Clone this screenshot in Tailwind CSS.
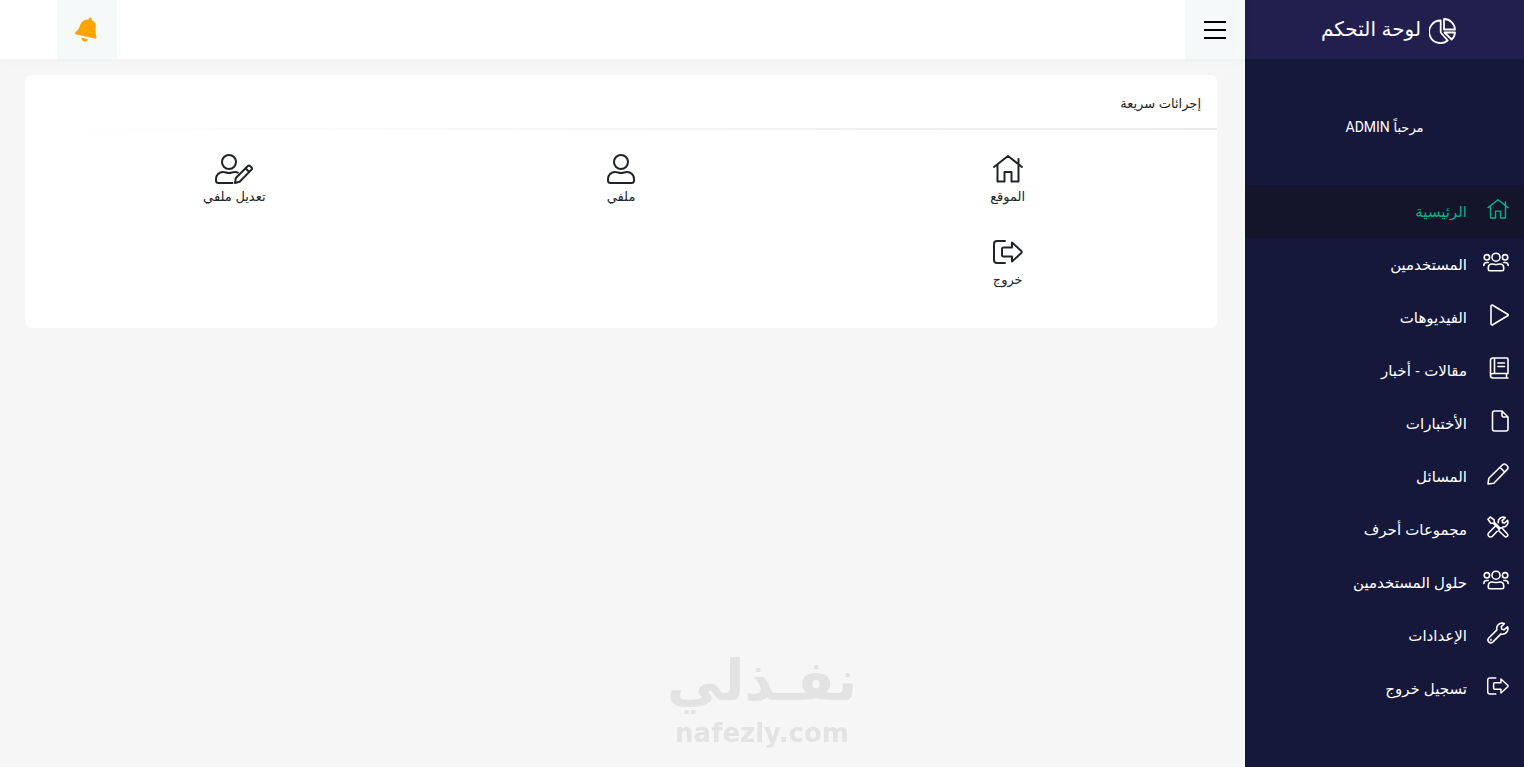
<!DOCTYPE html>
<html lang="ar" dir="rtl">
<head>
    <meta charset="UTF-8">
    <meta name="viewport" content="width=device-width, initial-scale=1.0">
    <title>لوحة التحكم</title>
    <script src="https://cdn.jsdelivr.net/npm/@tailwindcss/browser@4"></script>
</head>
<body class="bg-[#f6f6f6] text-[#212529] font-['Liberation_Sans','DejaVu_Sans',sans-serif]">
    <!-- Icon sprite -->
    <svg class="hidden">
        <symbol id="home" viewBox="0 0 30 28">
            <path d="M1 12 15 1l14 11M4.500 9.500v17h7v-9.500h7v9.500h7V9.500M25.500 4v5"/>
        </symbol>
        <symbol id="users" viewBox="0 0 26 20">
            <circle cx="13" cy="5.200" r="4"/><circle cx="3.900" cy="5.300" r="2.700"/><circle cx="22.100" cy="5.300" r="2.700"/>
            <path d="M9 12c1.500 0 2.400.5 4 .5s2.500-.5 4-.5c2.400 0 3.700 1.600 3.700 4v1.200c0 1-.6 1.600-1.500 1.600H6.800c-.9 0-1.500-.6-1.500-1.600V16c0-2.400 1.300-4 3.700-4zM.8 13.500c0-2 1.200-3 3-3h1.400M25.200 13.500c0-2-1.200-3-3-3h-1.400"/>
        </symbol>
        <symbol id="play" viewBox="0 0 20 22">
            <path d="M2 2.200v17.600c0 1 .9 1.500 1.700 1l15-9c.8-.5.8-1.100 0-1.600l-15-9c-.8-.5-1.700 0-1.700 1z"/>
        </symbol>
        <symbol id="book" viewBox="0 0 20 22">
            <path d="M19 16.500V2c0-.6-.4-1-1-1H4C2.500 1 1.500 2 1.500 3.500v15c0 1.500 1 2.500 2.500 2.500h15M17.500 16.500V21M19 16.500H4c-1.500 0-2.500.9-2.500 2.200M5.500 1v15.500M9 6h6.500M9 9.500h6.500"/>
        </symbol>
        <symbol id="file" viewBox="0 0 18 22">
            <path d="M11 1H3.500c-1.100 0-2 .9-2 2v16c0 1.100.9 2 2 2H15c1.100 0 2-.9 2-2V7zM11 1v4.500c0 .9.600 1.500 1.500 1.500H17"/>
        </symbol>
        <symbol id="pencil" viewBox="0 0 22 22">
            <path d="M1 21l.8-5.800L15.600 1.700c1-1 2.400-1 3.400 0l1.300 1.300c1 1 1 2.400 0 3.400L6.800 20.200zM13 4.300 17.700 9"/>
        </symbol>
        <symbol id="wrench" viewBox="0 0 22 22">
            <path d="M17.300 1.600c-2.200-.9-4.500-.4-6.100 1.100-1.400 1.400-1.800 3.300-1.300 5.200L1.800 16c-1 1-1 2.800 0 3.900 1.100 1.100 2.900 1.100 3.900.2l8.300-8.200c1.900.6 3.900.1 5.300-1.300 1.600-1.600 2-3.800 1.200-5.800l-3.300 2.900-2.500-.5-.5-2.500z"/>
            <circle cx="4" cy="17.900" r=".3"/>
        </symbol>
        <symbol id="tools" viewBox="0 0 22 22">
            <path d="M1 3.200 3.200 1l4 2.800v2.400l5.300 5.300M1 3.200l2.800 4h2.400l5.800 5.800M12 13.500c.7-1.700 2.200-2.200 3.200-1.200l5 5.400c.8.8.8 1.800 0 2.600s-1.900.8-2.700 0L12 15zM11.300 6.800c-.2-1.600.1-3 1.300-4.200 1.400-1.400 3.600-1.800 5.600-1l-3 3 .4 2 2 .4 3-2.700c.7 1.900.3 3.900-1.100 5.300-1 1-2.300 1.400-3.700 1.400M8.500 10 1.800 16.700c-1 1-1 2.500 0 3.500s2.600 1 3.600 0l4.800-4.900"/>
        </symbol>
        <symbol id="exit" viewBox="0 0 30 24">
            <path d="M12 1H4C2.300 1 1 2.300 1 4v16c0 1.700 1.300 3 3 3h8M19 2.500V7.500h-8.500c-.8 0-1.500.7-1.500 1.500v6c0 .8.700 1.500 1.500 1.500H19v5L28.300 13c.6-.6.6-1.400 0-2z"/>
        </symbol>
        <symbol id="user" viewBox="0 0 28 30">
            <circle cx="14" cy="8" r="7"/>
            <path d="M8 18c2.500 0 3.500 1 6 1s3.500-1 6-1c4 0 7 3 7 7v1.500c0 1.500-1 2.500-2.500 2.500h-21C2 29 1 28 1 26.500V25c0-4 3-7 7-7z"/>
        </symbol>
        <symbol id="user-edit" viewBox="0 0 38 30">
            <circle cx="14" cy="8" r="7"/>
            <path d="M17.500 29h-14C2 29 1 28 1 26.500V25c0-4 3-7 7-7 2.500 0 3.500 1 6 1s3.500-1 6-1c1.200 0 2 .2 2.800.6M20 29l.8-5L32.600 12.200c.8-.8 1.900-.8 2.700 0l1 1c.8.8.8 1.900 0 2.700L24.600 27.700zM30.500 14.300l3.700 3.700"/>
        </symbol>
        <symbol id="pie" viewBox="0 0 27 26">
            <path d="M11.700 2.500A11.300 11.300 0 1 0 18.700 22.500L11.700 14.500zM15 1v10.500h11A11 11 0 0 0 15 1zM15.500 14.500H26c-.2 3-1.400 5.300-3.300 7z"/>
        </symbol>
    </svg>

    <div class="flex min-h-screen">
        <!-- Sidebar -->
        <aside class="w-[279px] shrink-0 bg-[#15183a] text-white">
            <a href="#" class="flex h-[59px] items-center justify-center gap-2 bg-[#221e4d] pt-[2px] pl-2 text-xl">
                <svg class="h-[26px] w-[27px] fill-none stroke-current stroke-[1.8] [stroke-linejoin:round]"><use href="#pie"/></svg>
                <span class="pb-1">لوحة التحكم</span>
            </a>
            <div class="flex h-[126px] items-center justify-center pt-[10px] text-[13px]">
                <p>مرحباً <span class="font-['Roboto'] text-sm">ADMIN</span></p>
            </div>
            <nav class="text-[15px] [&_svg]:fill-none [&_svg]:stroke-current [&_svg]:[stroke-linecap:round] [&_svg]:[stroke-linejoin:round]">
                <a href="#" class="flex h-[53px] items-center bg-[#14152b] px-[15px] pt-[2px] text-[#00b189]">
                    <span class="w-[42px] pb-2"><svg class="h-5 w-[22px] stroke-2"><use href="#home"/></svg></span>
                    <span>الرئيسية</span>
                </a>
                <a href="#" class="flex h-[53px] items-center px-[15px] pt-[2px]">
                    <span class="w-[42px] pb-2"><svg class="h-5 w-[26px] stroke-[1.6]"><use href="#users"/></svg></span>
                    <span>المستخدمين</span>
                </a>
                <a href="#" class="flex h-[53px] items-center px-[15px] pt-[2px]">
                    <span class="w-[42px] pb-2"><svg class="h-[22px] w-5 stroke-[1.6]"><use href="#play"/></svg></span>
                    <span>الفيديوهات</span>
                </a>
                <a href="#" class="flex h-[53px] items-center px-[15px] pt-[2px]">
                    <span class="w-[42px] pb-2"><svg class="h-[22px] w-5 stroke-[1.6]"><use href="#book"/></svg></span>
                    <span>مقالات - أخبار</span>
                </a>
                <a href="#" class="flex h-[53px] items-center px-[15px] pt-[2px]">
                    <span class="w-[42px] pb-2"><svg class="h-[22px] w-[18px] stroke-[1.6]"><use href="#file"/></svg></span>
                    <span>الأختبارات</span>
                </a>
                <a href="#" class="flex h-[53px] items-center px-[15px] pt-[2px]">
                    <span class="w-[42px] pb-2"><svg class="h-[22px] w-[22px] stroke-[1.6]"><use href="#pencil"/></svg></span>
                    <span>المسائل</span>
                </a>
                <a href="#" class="flex h-[53px] items-center px-[15px] pt-[2px]">
                    <span class="w-[42px] pb-2"><svg class="h-[22px] w-[22px] stroke-[1.6]"><use href="#tools"/></svg></span>
                    <span>مجموعات أحرف</span>
                </a>
                <a href="#" class="flex h-[53px] items-center px-[15px] pt-[2px]">
                    <span class="w-[42px] pb-2"><svg class="h-5 w-[26px] stroke-[1.6]"><use href="#users"/></svg></span>
                    <span>حلول المستخدمين</span>
                </a>
                <a href="#" class="flex h-[53px] items-center px-[15px] pt-[2px]">
                    <span class="w-[42px] pb-2"><svg class="h-[22px] w-[22px] stroke-[1.6]"><use href="#wrench"/></svg></span>
                    <span>الإعدادات</span>
                </a>
                <a href="#" class="flex h-[53px] items-center px-[15px] pt-[2px]">
                    <span class="w-[42px] pb-2"><svg class="h-[18px] w-[22px] stroke-2"><use href="#exit"/></svg></span>
                    <span>تسجيل خروج</span>
                </a>
            </nav>
        </aside>

        <div class="flex min-w-0 grow flex-col">
            <!-- Top bar -->
            <header class="flex h-[59px] items-stretch justify-between bg-white pl-[57px] shadow-[0_0_12px_rgba(0,0,0,0.03)]">
                <button type="button" aria-label="القائمة" class="flex w-[60px] items-center justify-center bg-[#f5f9fa] text-black">
                    <svg class="h-[18px] w-[22px] stroke-current stroke-2" viewBox="0 0 22 18"><path d="M0 1h22M0 9h22M0 17h22"/></svg>
                </button>
                <button type="button" aria-label="الإشعارات" class="flex w-[60px] items-center justify-center bg-[#f5f9fa] text-[#ffa300]">
                    <svg class="h-[26px] w-6" viewBox="0 0 24 26" fill="currentColor">
                        <path d="M13.700 1.800c.2-1 .9-1.500 1.800-1.300.9.200 1.400.9 1.200 1.900l-.1.500c2.700 1.200 4.400 3.700 4.100 7-.3 3.700-.5 6.400.5 9 .3.600.4 1.100.3 1.600-.2.900-.9 1.300-1.700 1.100L1.300 17.500c-.9-.2-1.400-.9-1.200-1.700.1-.5.500-.9 1-1.200 2.600-1.500 3.200-4 4.300-7 1.200-3.300 4.300-5.200 8.200-5.200zM6.700 20.700l6.200 1.600c-.5 1.900-1.900 2.800-3.600 2.400-1.700-.4-2.800-2.100-2.600-4z"/>
                    </svg>
                </button>
            </header>

            <main class="grow pt-4 pr-7 pl-[25px]">
                <section class="rounded-md bg-white pb-[10px]">
                    <h2 class="px-4 pt-[19px] pb-[14px] text-[13px] leading-5">إجرائات سريعة</h2>
                    <div class="h-[2px] bg-linear-to-l from-[#ececec] to-white"></div>
                    <div class="grid grid-cols-3 px-4 pt-[22px] text-[13px] leading-5 [&_svg]:fill-none [&_svg]:stroke-current [&_svg]:stroke-2 [&_svg]:[stroke-linecap:round] [&_svg]:[stroke-linejoin:round]">
                        <a href="#" class="flex h-[83px] flex-col items-center">
                            <span class="flex h-[35px] items-center pb-[2px]"><svg class="h-7 w-[30px]"><use href="#home"/></svg></span>
                            <span>الموقع</span>
                        </a>
                        <a href="#" class="flex h-[83px] flex-col items-center">
                            <span class="flex h-[35px] items-center pb-[2px]"><svg class="h-[30px] w-7"><use href="#user"/></svg></span>
                            <span>ملفي</span>
                        </a>
                        <a href="#" class="flex h-[83px] flex-col items-center">
                            <span class="flex h-[35px] items-center pb-[2px]"><svg class="h-[30px] w-[38px]"><use href="#user-edit"/></svg></span>
                            <span>تعديل ملفي</span>
                        </a>
                        <a href="#" class="flex h-[83px] flex-col items-center">
                            <span class="flex h-[35px] items-center pb-[2px]"><svg class="h-6 w-[30px]"><use href="#exit"/></svg></span>
                            <span>خروج</span>
                        </a>
                    </div>
                </section>
            </main>
        </div>
    </div>

    <!-- Watermark, centred on the window over the page -->
    <div class="pointer-events-none fixed inset-x-0 bottom-[18px] flex flex-col items-center font-['DejaVu_Sans',sans-serif] font-bold text-[#e3e3e3]">
        <span class="text-[56px] leading-[72px]">نفـذلي</span>
        <span dir="ltr" class="text-[26px] leading-8">nafezly.com</span>
    </div>
</body>
</html>
